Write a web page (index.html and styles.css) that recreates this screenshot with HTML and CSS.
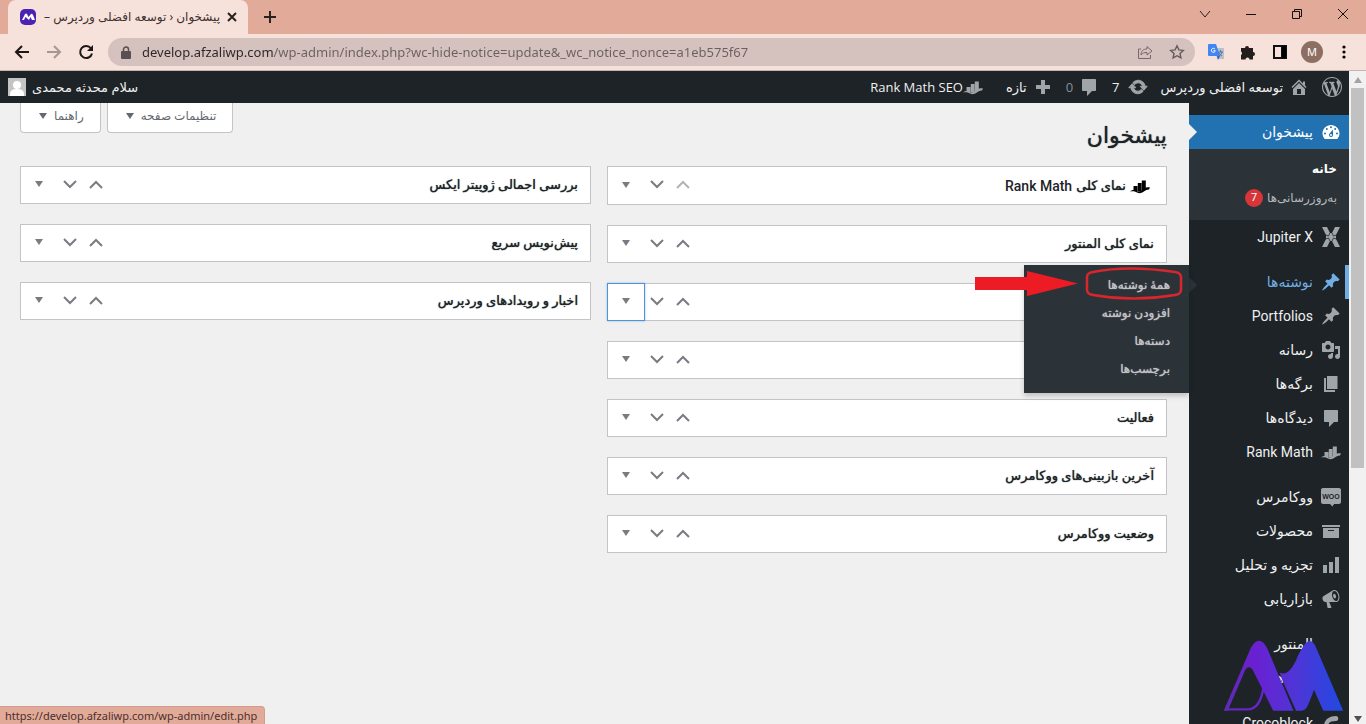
FILE: index.html
```html
<!DOCTYPE html>
<html lang="fa">
<head>
<meta charset="utf-8">
<title>پیشخوان ‹ توسعه افضلی وردپرس</title>
<link rel="stylesheet" href="styles.css">
</head>
<body>
<svg class="sprite" aria-hidden="true">
  <symbol id="i-wp" viewBox="0 0 20 20"><path d="M20 10c0-5.51-4.49-10-10-10C4.48 0 0 4.49 0 10c0 5.52 4.48 10 10 10 5.51 0 10-4.48 10-10zM7.78 15.37L4.37 6.22c.55-.02 1.17-.08 1.17-.08.5-.06.44-1.13-.06-1.11 0 0-1.45.11-2.37.11-.18 0-.37 0-.58-.01C4.12 2.69 6.87 1.11 10 1.11c2.33 0 4.45.87 6.05 2.34-.68-.11-1.65.39-1.65 1.58 0 .74.45 1.36.9 2.1.35.61.55 1.36.55 2.46 0 1.49-1.4 5-1.4 5l-3.03-8.37c.54-.02.82-.17.82-.17.5-.05.44-1.25-.06-1.22 0 0-1.44.12-2.38.12-.87 0-2.33-.12-2.33-.12-.5-.03-.56 1.2-.06 1.22l.92.08 1.26 3.41zM17.41 10c.24-.64.74-1.87.43-4.25.7 1.29 1.05 2.71 1.05 4.25 0 3.29-1.73 6.24-4.4 7.78.97-2.59 1.94-5.2 2.92-7.78zM6.1 18.09C3.12 16.65 1.11 13.53 1.11 10c0-1.3.23-2.48.72-3.59C3.25 10.3 4.67 14.2 6.1 18.09zm4.03-6.63l2.58 6.98c-.86.29-1.76.45-2.71.45-.79 0-1.57-.11-2.29-.33.81-2.38 1.62-4.74 2.42-7.1z"/></symbol>
  <symbol id="i-home" viewBox="0 0 20 20"><path d="M16 8.5l1.53 1.53-1.06 1.06L10 4.6l-6.47 6.49-1.06-1.06L10 2.5l4 4v-2h2v4zm-6-2.46l6 5.99V18H4v-5.97zM12 17v-5H8v5h4z"/></symbol>
  <symbol id="i-update" viewBox="0 0 20 20"><path stroke="currentColor" d="M10.2 3.28c3.53 0 6.43 2.61 6.92 6h2.08l-3.5 4-3.5-4h2.32c-.45-1.97-2.21-3.45-4.32-3.45-1.45 0-2.73.71-3.54 1.78L4.95 5.66C6.23 4.2 8.11 3.28 10.2 3.28zm-.4 13.44c-3.52 0-6.43-2.61-6.92-6H.8l3.5-4c1.17 1.33 2.33 2.67 3.5 4H5.48c.45 1.97 2.21 3.45 4.32 3.45 1.45 0 2.73-.71 3.54-1.78l1.71 1.95c-1.28 1.46-3.15 2.38-5.25 2.38z"/></symbol>
  <symbol id="i-comment" viewBox="0 0 20 20"><path d="M4 2h12c.6 0 1 .4 1 1v10c0 .6-.4 1-1 1h-3l-5 5v-5H4c-.6 0-1-.4-1-1V3c0-.6.4-1 1-1z"/></symbol>
  <symbol id="i-plus" viewBox="0 0 20 20"><path d="M17 8v4h-5v5H8v-5H3V8h5V3h4v5z"/></symbol>
  <symbol id="i-rank" viewBox="0 0 20 20"><path d="M3.500 10h4v5h-4zM7.800 7h3.700v8.500H7.800zM11.800 4.500h4V14l-4 1.500z"/><path d="M0 15.500c3-2.500 5.500-1.500 7-.5s3.500.5 5-1 4-3.500 8-2.500l-1 2c-2.500 0-4.200 1.200-5.500 2.300-1.700 1.400-4.500 1.900-6.500.7-2-1-4-1.700-7-1z"/></symbol>
  <symbol id="i-dash" viewBox="0 0 20 20"><path fill-rule="evenodd" d="M3.760 17h12.480c1.300-1.400 2.260-3.400 2.260-5.500C18.500 6.800 14.700 3 10 3S1.500 6.800 1.500 11.500c0 2.100.960 4.100 2.260 5.500zM10 4.200a1 1 0 110 2 1 1 0 010-2zM5.800 6a1 1 0 110 2 1 1 0 010-2zm8.400 0a1 1 0 110 2 1 1 0 010-2zM8.630 11.550L12 7.500V13a2 2 0 11-3.370-1.450zM4 10.500a1 1 0 110 2 1 1 0 010-2zm12 0a1 1 0 110 2 1 1 0 010-2zM10 12a1 1 0 100 2 1 1 0 000-2z"/></symbol>
  <symbol id="i-jup" viewBox="0 0 20 20"><path d="M1 0h5l3 6h2l3-6h5l-4 8v4l4 8h-5l-3-6H9l-3 6H1l4-8V8z"/><path d="M4.500 8l3 1 1.500-3M15.500 8l-3 1L11 6M4.500 12l3-1L9 14M15.500 12l-3-1-1.500 3" fill="none" stroke="#1d2327" stroke-width=".8"/></symbol>
  <symbol id="i-pin" viewBox="0 0 20 20"><path d="M10.440 3.020l1.820-1.820 6.360 6.350-1.830 1.820c-1.050-.68-2.480-.57-3.410.36l-.75.75c-.92.93-1.040 2.350-.35 3.410l-1.830 1.820-2.410-2.410-2.800 2.790c-.42.42-3.380 2.710-3.800 2.290s1.860-3.390 2.280-3.810l2.790-2.790L4.100 9.360l1.830-1.820c1.050.69 2.480.57 3.400-.36l.75-.75c.93-.92 1.050-2.350.36-3.410z"/></symbol>
  <symbol id="i-media" viewBox="0 0 20 20"><path d="M13 11V4c0-.55-.45-1-1-1h-1.670L9 1H5L3.670 3H2c-.55 0-1 .45-1 1v7c0 .55.45 1 1 1h10c.55 0 1-.45 1-1zM7 4.500c1.380 0 2.500 1.120 2.500 2.500S8.380 9.500 7 9.500 4.500 8.380 4.500 7 5.620 4.500 7 4.500zM14 6h5v10.500c0 1.380-1.120 2.500-2.500 2.500S14 17.880 14 16.500s1.120-2.500 2.500-2.500c.17 0 .34.020.5.050V9h-3V6zm-4 8.050V13h2v3.500c0 1.380-1.120 2.500-2.500 2.500S7 17.880 7 16.500 8.120 14 9.500 14c.17 0 .34.020.5.050z"/></symbol>
  <symbol id="i-page" viewBox="0 0 20 20"><path d="M6 15V2h10.500v13H6zm-1 1h9v2H3V4h2v12z"/></symbol>
  <symbol id="i-woo" viewBox="0 0 20 20"><path d="M2 1h16c1.100 0 2 .9 2 2v12c0 1.100-.9 2-2 2h-5l-1.500 2.500L9 17H2c-1.100 0-2-.9-2-2V3c0-1.100.9-2 2-2z"/><text x="10" y="12" text-anchor="middle" class="woo-text">WOO</text></symbol>
  <symbol id="i-archive" viewBox="0 0 20 20"><path d="M19 4v2H1V4h18zM2 7h16v10H2V7zm11 3V9H7v1h6z"/></symbol>
  <symbol id="i-chart" viewBox="0 0 20 20"><path d="M18 18V2h-4v16h4zm-6 0V7H8v11h4zm-6 0v-8H2v8h4z"/></symbol>
  <symbol id="i-mega" viewBox="0 0 20 20"><path d="M18.150 5.940c.46 1.620.38 3.220-.02 4.480-.42 1.280-1.260 2.180-2.300 2.480-.16.060-.26.060-.4.060-.06.020-.12.020-.18.020-.06.020-.14.020-.22.020h-6.800l2.220 5.500c.02.140-.06.260-.14.340-.08.100-.24.160-.34.160H6.950c-.1 0-.26-.06-.34-.16-.08-.08-.16-.2-.14-.34l-1-5.500H4.250l-.02-.02c-.5.060-1.080-.18-1.540-.62s-.88-1.080-1.060-1.880c-.24-.8-.2-1.560-.02-2.200.18-.62.58-1.080 1.060-1.300l.02-.02 9-5.400c.1-.06.18-.1.24-.16.06-.04.14-.08.24-.12.16-.08.28-.12.5-.18 1.040-.3 2.240.1 3.220.98s1.840 2.240 2.260 3.860zm-2.580 5.980h-.02c.4-.1.74-.34 1.040-.7.58-.7.86-1.760.86-3.040 0-.64-.1-1.300-.28-1.980-.34-1.360-1.020-2.500-1.780-3.240s-1.680-1.100-2.460-.88c-.82.220-1.400.96-1.700 2-.32 1.040-.28 2.360.06 3.720.38 1.360 1 2.500 1.800 3.240.78.740 1.620 1.100 2.480.88zm-2.540-7.080c.22-.04.42-.02.62.040.38.160.76.480 1.020 1s.42 1.200.42 1.780c0 .3-.04.560-.12.8-.18.480-.44.840-.86.940-.34.100-.8-.06-1.140-.4s-.64-.86-.78-1.500c-.18-.62-.12-1.240.02-1.720s.48-.84.82-.94z"/></symbol>
  <symbol id="i-croco" viewBox="0 0 20 20"><path d="M15 3C8 3 3 7 3 13s4 8 9 8l1-4c-4 0-6-1-6-4 0-4 4-5 8-5 3 0 3-5 0-5z"/></symbol>
  <symbol id="i-up" viewBox="0 0 14 9"><path d="M1 8l6-6 6 6" fill="none" stroke="currentColor" stroke-width="2"/></symbol>
  <symbol id="i-down" viewBox="0 0 14 9"><path d="M1 1l6 6 6-6" fill="none" stroke="currentColor" stroke-width="2"/></symbol>
  <symbol id="i-tri" viewBox="0 0 8 6"><path d="M0 0h8L4 6z"/></symbol>
</svg>

<header class="browser">
  <div class="tabstrip">
    <div class="tab">
      <svg class="favicon" viewBox="0 0 16 16"><rect width="16" height="16" rx="5" fill="#4c22b5"/><path d="M2 11l3-6q1-1 2 0l1.500 3L11 5q1-1 2 1l2 5h-3l-1.500-3L9 11 5.500 8 4 11z" fill="#fff"/></svg>
      <span class="tab-title" dir="rtl">پیشخوان ‹ توسعه افضلی وردپرس –</span>
      <button class="plain" aria-label="Close tab"><svg width="10" height="10" viewBox="0 0 10 10"><path d="M1 1l8 8M9 1L1 9" stroke="#2b2020" stroke-width="2"/></svg></button>
    </div>
    <button class="plain" aria-label="New tab"><svg width="12" height="12" viewBox="0 0 12 12"><path d="M6 0v12M0 6h12" stroke="#2b2020" stroke-width="2"/></svg></button>
    <div class="window-controls">
      <button class="plain" aria-label="Search tabs"><svg width="12" height="12" viewBox="0 0 12 12"><path d="M1 3l5 6 5-6" fill="none" stroke="#2b2020"/></svg></button>
      <button class="plain" aria-label="Minimize"><svg width="12" height="12" viewBox="0 0 12 12"><path d="M1 6.500h10" stroke="#111"/></svg></button>
      <button class="plain" aria-label="Restore"><svg width="12" height="12" viewBox="0 0 12 12"><path d="M1.500 3.500h7v7h-7zM3.500 3V1.500h7v7H9" fill="none" stroke="#111"/></svg></button>
      <button class="plain" aria-label="Close window"><svg width="12" height="12" viewBox="0 0 12 12"><path d="M1 1l10 10M11 1L1 11" stroke="#111"/></svg></button>
    </div>
  </div>
  <div class="toolbar">
    <button class="plain" aria-label="Back"><svg width="16" height="16" viewBox="0 0 16 16"><path d="M15 8H2m6-6L2 8l6 6" fill="none" stroke="#1d1817" stroke-width="2"/></svg></button>
    <button class="plain" aria-label="Forward"><svg width="16" height="16" viewBox="0 0 16 16"><path d="M1 8h13M8 2l6 6-6 6" fill="none" stroke="#a59794" stroke-width="2"/></svg></button>
    <button class="plain" aria-label="Reload"><svg width="16" height="16" viewBox="0 0 16 16"><path d="M13 4.500A6 6 0 1 0 14 9.500" fill="none" stroke="#1d1817" stroke-width="2"/><path d="M15 1v6H9z" fill="#1d1817"/></svg></button>
    <div class="omnibox">
      <svg width="10" height="13" viewBox="0 0 10 13"><path d="M1 5h8q1 0 1 1v6q0 1-1 1H1q-1 0-1-1V6q0-1 1-1z" fill="#5a5051"/><path d="M2.500 6V3.500a2.500 2.500 0 015 0V6" fill="none" stroke="#5a5051" stroke-width="1.500"/></svg>
      <input class="url" aria-label="Address" value="develop.afzaliwp.com/wp-admin/index.php?wc-hide-notice=update&amp;_wc_notice_nonce=a1eb575f67">
      <button class="plain" aria-label="Share"><svg width="16" height="16" viewBox="0 0 16 16"><path d="M4 5H1.500v9.500h12V11M4 11c0-4 2-6 6-6V2.500l5 4.500-5 4V8.500c-3 0-4.500.5-6 2.500z" fill="none" stroke="#77696a"/></svg></button>
      <button class="plain" aria-label="Bookmark"><svg width="16" height="16" viewBox="0 0 16 16"><path d="M8 1.800l1.900 4.100 4.400.5-3.300 3 .9 4.500L8 11.700l-3.900 2.200.9-4.500-3.300-3 4.400-.5z" fill="none" stroke="#665a5a" stroke-width="1.400"/></svg></button>
    </div>
    <div class="extensions">
      <button class="plain" aria-label="Translate"><svg width="16" height="16" viewBox="0 0 16 16"><path d="M7 4h8q1 0 1 1v10H9z" fill="#b8bfd0"/><path d="M1 0h7l4 12H1q-1 0-1-1V1q0-1 1-1z" fill="#4285f4"/><path d="M9 12h3l-2 4z" fill="#2f62c4"/><path d="M10 8h5m-2.500-2v2m1.500 0q-1 3-3 4m0-3q1 2 3 3" fill="none" stroke="#5f7290"/><path d="M7 5.200a2 2 0 10.300 1.500H5.400" fill="none" stroke="#fff"/></svg></button>
      <button class="plain" aria-label="Extensions"><svg width="16" height="16" viewBox="0 0 16 16"><path d="M2 4h3a2 2 0 014 0h4v4a2 2 0 010 4v3.500H9.500a2 2 0 00-4 0H1V11a2 2 0 000-3.500V4z" fill="#231d1c"/></svg></button>
      <button class="plain" aria-label="Side panel"><svg width="16" height="16" viewBox="0 0 16 16"><path d="M2 2h12v12H2zM10 2h4v12h-4z" fill="none" stroke="#111" stroke-width="2"/><path d="M10 2h4v12h-4z"/></svg></button>
      <button class="profile" aria-label="Profile M">M</button>
      <button class="plain" aria-label="Browser menu"><svg width="16" height="16" viewBox="0 0 16 16"><circle cx="8" cy="3" r="1.600"/><circle cx="8" cy="8" r="1.600"/><circle cx="8" cy="13" r="1.600"/></svg></button>
    </div>
  </div>
</header>

<div class="viewport">
  <div class="page" dir="rtl">
    <nav class="adminbar" aria-label="نوار ابزار">
      <a href="#" aria-label="وردپرس"><svg class="icon"><use href="#i-wp"/></svg></a>
      <a href="#"><svg class="icon"><use href="#i-home"/></svg>توسعه افضلی وردپرس</a>
      <a href="#" class="updates"><svg class="icon"><use href="#i-update"/></svg>7</a>
      <a href="#" class="dim"><svg class="icon"><use href="#i-comment"/></svg>0</a>
      <a href="#"><svg class="icon"><use href="#i-plus"/></svg>تازه</a>
      <a href="#" class="rank-link"><svg class="icon"><use href="#i-rank"/></svg>Rank Math SEO</a>
      <a href="#" class="account">سلام محدثه محمدی<svg width="18" height="18" viewBox="0 0 18 18"><rect width="18" height="18" fill="#c4c4c4"/><circle cx="9" cy="7" r="4" fill="#fff"/><path d="M2 18v-2q0-5 7-5t7 5v2z" fill="#fff"/></svg></a>
    </nav>
    <div class="body">
      <nav class="menu" aria-label="فهرست اصلی">
        <div class="item current"><a href="#"><svg class="icon"><use href="#i-dash"/></svg>پیشخوان</a></div>
        <div class="submenu">
          <a href="#" class="active">خانه</a>
          <a href="#">به‌روزرسانی‌ها <span class="badge">7</span></a>
        </div>
        <div class="item"><a href="#"><svg class="icon"><use href="#i-jup"/></svg>Jupiter X</a></div>
        <div class="item opened separated">
          <a href="#"><svg class="icon"><use href="#i-pin"/></svg>نوشته‌ها</a>
          <div class="flyout">
            <a href="#">همهٔ نوشته‌ها</a>
            <a href="#">افزودن نوشته</a>
            <a href="#">دسته‌ها</a>
            <a href="#">برچسب‌ها</a>
            <svg class="marker" viewBox="0 0 210 36"><path d="M0 12h52V6l51 12.500L52 31v-6H0z" fill="#ed1c24"/><path d="M112 12q0-4 6-5 35-7 82 0 6 1 6 5v13q0 4-6 5-42 7-82 0-6-1-6-5z" fill="none" stroke="#d9252d" stroke-width="2.500"/></svg>
          </div>
        </div>
        <div class="item"><a href="#"><svg class="icon"><use href="#i-pin"/></svg>Portfolios</a></div>
        <div class="item"><a href="#"><svg class="icon"><use href="#i-media"/></svg>رسانه</a></div>
        <div class="item"><a href="#"><svg class="icon"><use href="#i-page"/></svg>برگه‌ها</a></div>
        <div class="item"><a href="#"><svg class="icon"><use href="#i-comment"/></svg>دیدگاه‌ها</a></div>
        <div class="item"><a href="#"><svg class="icon"><use href="#i-rank"/></svg>Rank Math</a></div>
        <div class="item separated"><a href="#"><svg class="icon"><use href="#i-woo"/></svg>ووکامرس</a></div>
        <div class="item"><a href="#"><svg class="icon"><use href="#i-archive"/></svg>محصولات</a></div>
        <div class="item"><a href="#"><svg class="icon"><use href="#i-chart"/></svg>تجزیه و تحلیل</a></div>
        <div class="item"><a href="#"><svg class="icon"><use href="#i-mega"/></svg>بازاریابی</a></div>
        <div class="item separated"><a href="#"><span class="icon"></span>المنتور</a></div>
        <div class="item"><a href="#"><span class="icon"></span>قالب‌ها</a></div>
        <div class="item separated"><a href="#"><svg class="icon"><use href="#i-croco"/></svg>Crocoblock</a></div>
      </nav>
      <main class="content">
        <div class="heading">
          <h1>پیشخوان</h1>
          <div class="screen-meta">
            <button>تنظیمات صفحه <svg class="tri"><use href="#i-tri"/></svg></button>
            <button>راهنما <svg class="tri"><use href="#i-tri"/></svg></button>
          </div>
        </div>
        <div class="columns">
          <div class="column primary">
            <section class="box"><h2><svg class="icon"><use href="#i-rank"/></svg>نمای کلی <span class="latin">Rank Math</span></h2><div class="tools"><button disabled aria-label="بالا"><svg><use href="#i-up"/></svg></button><button aria-label="پایین"><svg><use href="#i-down"/></svg></button><button class="toggle" aria-label="باز کردن"><svg class="tri"><use href="#i-tri"/></svg></button></div></section>
            <section class="box"><h2>نمای کلی المنتور</h2><div class="tools"><button aria-label="بالا"><svg><use href="#i-up"/></svg></button><button aria-label="پایین"><svg><use href="#i-down"/></svg></button><button class="toggle" aria-label="باز کردن"><svg class="tri"><use href="#i-tri"/></svg></button></div></section>
            <section class="box"><h2></h2><div class="tools"><button aria-label="بالا"><svg><use href="#i-up"/></svg></button><button aria-label="پایین"><svg><use href="#i-down"/></svg></button><button class="toggle focused" aria-label="باز کردن"><svg class="tri"><use href="#i-tri"/></svg></button></div></section>
            <section class="box"><h2></h2><div class="tools"><button aria-label="بالا"><svg><use href="#i-up"/></svg></button><button aria-label="پایین"><svg><use href="#i-down"/></svg></button><button class="toggle" aria-label="باز کردن"><svg class="tri"><use href="#i-tri"/></svg></button></div></section>
            <section class="box"><h2>فعالیت</h2><div class="tools"><button aria-label="بالا"><svg><use href="#i-up"/></svg></button><button aria-label="پایین"><svg><use href="#i-down"/></svg></button><button class="toggle" aria-label="باز کردن"><svg class="tri"><use href="#i-tri"/></svg></button></div></section>
            <section class="box"><h2>آخرین بازبینی‌های ووکامرس</h2><div class="tools"><button aria-label="بالا"><svg><use href="#i-up"/></svg></button><button aria-label="پایین"><svg><use href="#i-down"/></svg></button><button class="toggle" aria-label="باز کردن"><svg class="tri"><use href="#i-tri"/></svg></button></div></section>
            <section class="box"><h2>وضعیت ووکامرس</h2><div class="tools"><button aria-label="بالا"><svg><use href="#i-up"/></svg></button><button aria-label="پایین"><svg><use href="#i-down"/></svg></button><button class="toggle" aria-label="باز کردن"><svg class="tri"><use href="#i-tri"/></svg></button></div></section>
          </div>
          <div class="column">
            <section class="box"><h2>بررسی اجمالی ژوپیتر ایکس</h2><div class="tools"><button aria-label="بالا"><svg><use href="#i-up"/></svg></button><button aria-label="پایین"><svg><use href="#i-down"/></svg></button><button class="toggle" aria-label="باز کردن"><svg class="tri"><use href="#i-tri"/></svg></button></div></section>
            <section class="box"><h2>پیش‌نویس سریع</h2><div class="tools"><button aria-label="بالا"><svg><use href="#i-up"/></svg></button><button aria-label="پایین"><svg><use href="#i-down"/></svg></button><button class="toggle" aria-label="باز کردن"><svg class="tri"><use href="#i-tri"/></svg></button></div></section>
            <section class="box"><h2>اخبار و رویدادهای وردپرس</h2><div class="tools"><button aria-label="بالا"><svg><use href="#i-up"/></svg></button><button aria-label="پایین"><svg><use href="#i-down"/></svg></button><button class="toggle" aria-label="باز کردن"><svg class="tri"><use href="#i-tri"/></svg></button></div></section>
          </div>
        </div>
      </main>
    </div>
  </div>
  <div class="scrollbar">
    <svg class="tri up"><use href="#i-tri"/></svg>
    <div class="track"><div class="thumb"></div></div>
    <svg class="tri"><use href="#i-tri"/></svg>
  </div>
  <svg class="brand" viewBox="130 510 362 214"><defs><linearGradient id="brand" gradientUnits="userSpaceOnUse" x1="130" x2="492" y1="0" y2="0"><stop offset="0" stop-color="#5d2db0"/><stop offset=".25" stop-color="#6a20d0"/><stop offset=".6" stop-color="#4f35d6"/><stop offset="1" stop-color="#2149e2"/></linearGradient></defs><path fill="url(#brand)" d="M212 535Q237 490 262 535L341 723H280L218 600Q207 585 196 600L143 723H131z"/><path fill="none" stroke="url(#brand)" stroke-width="7" d="M136 719H206Q240 716 250 656"/><path fill="url(#brand)" d="M300 609Q325 620 347 575Q361 540 376 521Q392 503 406 526L491 723H431L403 660Q394 685 385 705Q378 723 365 723H349L315 648Q304 625 300 609z"/></svg>
  <div class="status">https://develop.afzaliwp.com/wp-admin/edit.php</div>
</div>
</body>
</html>
```
FILE: styles.css
```css
* { box-sizing: border-box; }
body {
  margin: 0;
  height: 100vh;
  display: flex;
  flex-direction: column;
  overflow: hidden;
  background: #f0f0f1;
  font-family: Roboto, "DejaVu Sans", sans-serif;
  font-size: 13px;
  color: #1d2327;
}
a { color: inherit; text-decoration: none; }
button { font: inherit; color: inherit; padding: 0; border: 0; background: none; }
svg { display: block; flex: none; }
.sprite { display: none; }
.plain { display: flex; align-items: center; justify-content: center; width: 16px; height: 16px; }

/* Browser frame */
.browser { flex: none; font-family: "Noto Sans", "DejaVu Sans", sans-serif; }
.tabstrip { display: flex; align-items: center; gap: 14px; height: 34px; padding-left: 8px; background: #e2ab99; }
.tab {
  display: flex; align-items: center; gap: 4px;
  width: 240px; height: 34px; padding: 0 8px 0 12px;
  background: #f6e1db; border-radius: 8px 8px 0 0;
}
.favicon { width: 16px; height: 16px; }
.tab-title { flex: 1; min-width: 0; white-space: nowrap; font-size: 12px; line-height: 20px; color: #40312e; }
.window-controls { display: flex; gap: 30px; margin-left: auto; padding: 0 15px 6px 0; }
.toolbar { display: flex; align-items: center; gap: 16px; height: 37px; padding: 0 14px; background: #f6e1db; border-bottom: 1px solid #c8b4ae; }
.omnibox {
  display: flex; align-items: center; gap: 16px; flex: 1;
  height: 28px; padding: 0 10px 0 13px; margin-left: -2px;
  background: #d5c2be; border-radius: 14px;
}
.url {
  flex: 1; min-width: 0; padding: 0; border: 0; outline: 0; margin-left: -5px;
  font: 13px "Noto Sans", sans-serif; color: #6b5f5f;
  background: linear-gradient(to right, #2c2526 132px, #6b5f5f 132px);
  -webkit-background-clip: text; background-clip: text;
  -webkit-text-fill-color: transparent;
}
.extensions { display: flex; align-items: center; gap: 16px; margin-left: -3px; }
.profile { width: 22px; height: 22px; margin: 0 -3px; border-radius: 50%; background: #8d6e63; color: #fff; font-size: 11px; line-height: 22px; }

/* Viewport */
.viewport { position: relative; display: flex; flex: 1; min-height: 0; }
.page { display: flex; flex-direction: column; flex: 1; min-width: 0; overflow: hidden; }
.icon { width: 20px; height: 20px; flex: none; fill: #a0a5aa; color: #a0a5aa; }
.tri { width: 8px; height: 6px; fill: currentColor; }
.scrollbar { display: flex; flex-direction: column; align-items: center; width: 17px; padding: 6px 0 2px; gap: 5px; background: #f1f1f1; color: #505050; }
.scrollbar .up { transform: rotate(180deg); color: #a3a3a3; }
.track { flex: 1; width: 13px; }
.thumb { height: 61%; background: #c1c1c1; }

/* Admin bar */
.adminbar { display: flex; align-items: center; flex: none; gap: 13px; height: 32px; padding: 0 7px 0 8px; background: #1d2327; color: #f0f0f1; font-family: "Open Sans", "DejaVu Sans", sans-serif; font-size: 13px; white-space: nowrap; }
.adminbar a { display: flex; align-items: center; gap: 6px; }
.adminbar .updates { gap: 8px; }
.adminbar .dim { color: #8c8f94; }
.adminbar .rank-link { gap: 0; margin-right: 10px; }
.adminbar .account { margin-right: auto; }

/* Admin menu */
.body { display: flex; flex: 1; min-height: 0; }
.menu { width: 160px; flex: none; padding-top: 12px; background: #1d2327; color: #f0f0f1; }
.item { position: relative; }
.item > a { display: flex; align-items: center; gap: 8px; height: 34px; padding: 0 8px; font-size: 14px; white-space: nowrap; }
.separated { margin-top: 11px; }
.current { background: #2271b1; color: #fff; }
.current .icon { fill: #fff; }
.current::after {
  content: ""; position: absolute; left: 0; top: 9px;
  border: 8px solid transparent; border-left-color: #f0f0f1; border-right-width: 0;
}
.submenu { height: 71px; padding: 5px 12px; background: #2c3338; color: #b4b9be; font-size: 12px; }
.submenu a { display: flex; align-items: center; gap: 4px; height: 29px; }
.submenu .active { color: #fff; font-weight: bold; }
.badge { width: 18px; height: 18px; border-radius: 9px; background: #d63638; color: #fff; font-size: 11px; line-height: 18px; text-align: center; }
.opened { color: #72aee6; box-shadow: inset -4px 0 #72aee6; }
.opened .icon { fill: #72aee6; }
.opened::after {
  content: ""; position: absolute; left: 0; top: 12px;
  border: 8px solid transparent; border-left-color: #2c3338; border-right-width: 0;
}
.flyout {
  position: absolute; right: 100%; top: 0; z-index: 2; width: 165px;
  padding: 6px 19px 10px; background: #2c3338; color: #c3c4c7;
  font-size: 12px; text-shadow: 0 0 1px; box-shadow: 0 3px 5px rgba(0, 0, 0, .2);
}
.flyout a { display: block; line-height: 28px; }
.marker { position: absolute; right: 4px; top: 0; width: 210px; height: 36px; }
.woo-text { font: bold 7px "Liberation Sans", sans-serif; fill: #1d2327; }

/* Dashboard */
.content { flex: 1; min-width: 0; padding: 0 22px 0 20px; background: #f0f0f1; }
.heading { display: flex; justify-content: space-between; align-items: flex-start; height: 63px; }
h1 { margin: 0; padding-top: 16px; font-size: 22px; font-weight: 500; line-height: 34px; text-shadow: 0 0 1px; }
.screen-meta { display: flex; gap: 6px; }
.screen-meta button {
  display: flex; align-items: center; gap: 7px; height: 30px; padding: 0 16px 4px 18px;
  border: 1px solid #c3c4c7; border-top: 0; border-radius: 0 0 4px 4px;
  background: #fff; color: #646970; font-size: 12px;
}
.columns { display: grid; grid-template-columns: 560fr 571fr; gap: 16px; }
.column { display: flex; flex-direction: column; gap: 20px; }
.box { display: flex; justify-content: space-between; align-items: center; height: 38px; border: 1px solid #c3c4c7; background: #fff; }
.primary .box:first-child { height: 39px; }
h2 { display: flex; align-items: center; gap: 4px; margin: 0; padding-right: 12px; font-size: 13px; font-weight: 500; line-height: 20px; text-shadow: 0 0 1px; }
h2 .icon { fill: #000; margin-right: 4px; }
.latin { font-size: 14px; text-shadow: none; }
.tools { display: flex; align-items: center; height: 36px; color: #787c82; }
.tools button { display: flex; align-items: center; justify-content: center; width: 26px; height: 36px; padding-bottom: 2px; }
.tools button svg { width: 14px; height: 9px; }
.tools button:disabled { color: #b0b3b7; }
.tools .toggle { width: 36px; }
.tools .toggle .tri { width: 8px; height: 6px; }
.tools .focused { outline: 1px solid #4f94d4; box-shadow: 0 0 2px 1px rgba(79, 148, 212, .6); }

/* Overlays */
.brand { position: absolute; right: 22px; bottom: 13px; width: 121px; height: 71px; z-index: 3; }
.status {
  position: absolute; left: 0; bottom: 0; padding: 1px 7px 0 5px;
  border: 1px solid #d29d8c; border-width: 1px 1px 0 0; border-radius: 0 4px 0 0; background: #e2ab99;
  color: #4b302a; font: 11px/16px "Noto Sans", sans-serif;
}
```
